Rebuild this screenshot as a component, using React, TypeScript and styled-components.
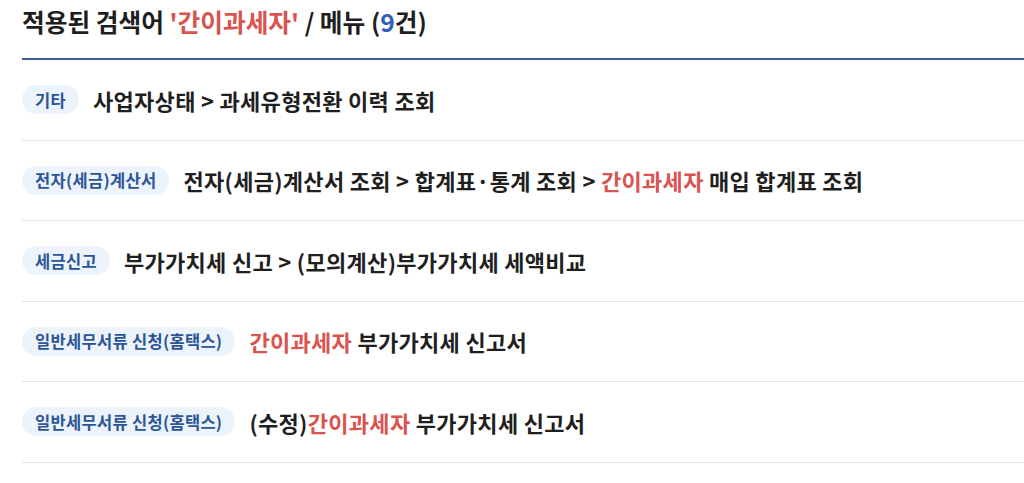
import React from 'react'
import styled, { createGlobalStyle } from 'styled-components'

const GlobalStyle = createGlobalStyle`
  html, body {
    margin: 0;
    padding: 0;
    background: #ffffff;
  }
  body {
    font-family: "Noto Sans CJK KR", "Noto Sans", sans-serif;
    color: #222222;
  }
`

const Wrap = styled.div`
  padding: 0 0 0 22px;
`

const Title = styled.h2`
  margin: 0;
  height: 60px;
  display: flex;
  align-items: center;
  padding-bottom: 16px;
  box-sizing: border-box;
  font-size: 24.7px;
  font-weight: 700;
  color: #1e1e1e;
  border-bottom: 2px solid #3d5c98;
`

const Keyword = styled.span`
  color: #d9534f;
`

const Count = styled.span`
  color: #2f5fb3;
`

const List = styled.ul`
  list-style: none;
  margin: 0;
  padding: 0;
`

const Row = styled.li`
  display: flex;
  align-items: center;
  height: 80.5px;
  box-sizing: border-box;
  border-bottom: 1.5px solid #e2e2e2;
  gap: 14px;
`

const Badge = styled.span`
  display: inline-flex;
  align-items: center;
  height: 29px;
  padding: 0 13px;
  border-radius: 15px;
  background: #edf3fb;
  color: #2b5597;
  font-size: 16.5px;
  font-weight: 600;
  letter-spacing: 0.3px;
  white-space: nowrap;
`

const Path = styled.span`
  font-size: 22px;
  font-weight: 700;
  color: #1f1f1f;
  letter-spacing: 0.3px;
  white-space: nowrap;
`

const Hit = styled.span`
  color: #d9534f;
`

const KEY = '간이과세자'

const highlight = (text: string) => {
  const parts = text.split(KEY)
  return parts.map((p, i) => (
    <React.Fragment key={i}>
      {p}
      {i < parts.length - 1 && <Hit>{KEY}</Hit>}
    </React.Fragment>
  ))
}

const menus = [
  { cat: '기타', path: '사업자상태 > 과세유형전환 이력 조회' },
  { cat: '전자(세금)계산서', path: '전자(세금)계산서 조회 > 합계표·통계 조회 > 간이과세자 매입 합계표 조회' },
  { cat: '세금신고', path: '부가가치세 신고 > (모의계산)부가가치세 세액비교' },
  { cat: '일반세무서류 신청(홈택스)', path: '간이과세자 부가가치세 신고서' },
  { cat: '일반세무서류 신청(홈택스)', path: '(수정)간이과세자 부가가치세 신고서' },
]

const App = () => {
  return (
    <Wrap>
      <GlobalStyle />
      <Title>
        적용된 검색어&nbsp;<Keyword>'간이과세자'</Keyword>&nbsp;/ 메뉴 (<Count>9</Count>건)
      </Title>
      <List>
        {menus.map((m, i) => (
          <Row key={i}>
            <Badge>{m.cat}</Badge>
            <Path>{highlight(m.path)}</Path>
          </Row>
        ))}
      </List>
    </Wrap>
  )
}

export default App
